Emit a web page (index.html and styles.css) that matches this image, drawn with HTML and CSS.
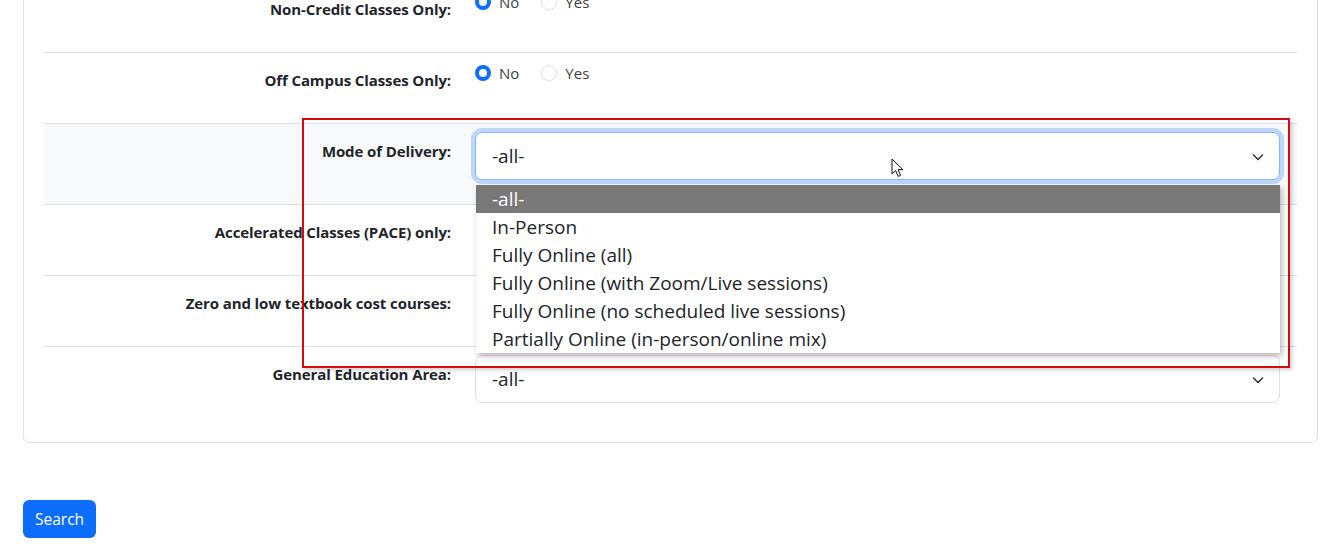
FILE: index.html
```html
<!DOCTYPE html>
<html lang="en">
<head>
    <meta charset="UTF-8">
    <meta name="viewport" content="width=device-width, initial-scale=1.0">
    <title>Class Search</title>
    <link rel="stylesheet" href="styles.css">
</head>
<body>
    <div class="search-card">
        <div class="form-row">
            <div class="form-label">Non-Credit Classes Only:</div>
            <div class="form-control radios">
                <label class="radio"><span class="dot checked"></span>No</label>
                <label class="radio"><span class="dot"></span>Yes</label>
            </div>
        </div>
        <div class="form-row">
            <div class="form-label">Off Campus Classes Only:</div>
            <div class="form-control radios">
                <label class="radio"><span class="dot checked"></span>No</label>
                <label class="radio"><span class="dot"></span>Yes</label>
            </div>
        </div>
        <div class="form-row shaded">
            <div class="form-label">Mode of Delivery:</div>
            <div class="form-control">
                <div class="select-wrap">
                    <div class="select focused">-all-
                        <svg class="chevron" width="16" height="16" viewBox="0 0 16 16"><path d="M3.5 6l4.5 4.5L12.5 6" fill="none" stroke="#343a40" stroke-width="1.6" stroke-linecap="round" stroke-linejoin="round"/></svg>
                    </div>
                    <ul class="options">
                        <li class="active">-all-</li>
                        <li>In-Person</li>
                        <li>Fully Online (all)</li>
                        <li>Fully Online (with Zoom/Live sessions)</li>
                        <li>Fully Online (no scheduled live sessions)</li>
                        <li>Partially Online (in-person/online mix)</li>
                    </ul>
                    <svg class="cursor" width="14" height="20" viewBox="0 0 14 20"><path d="M1 1v15l3.6-3.4 2.6 5.8 2.4-1.1-2.6-5.6H12z" fill="#fff" stroke="#111" stroke-width="1" stroke-linejoin="round"/></svg>
                </div>
            </div>
        </div>
        <div class="form-row">
            <div class="form-label">Accelerated Classes (PACE) only:</div>
            <div class="form-control covered"></div>
        </div>
        <div class="form-row">
            <div class="form-label">Zero and low textbook cost courses:</div>
            <div class="form-control covered"></div>
        </div>
        <div class="form-row">
            <div class="form-label">General Education Area:</div>
            <div class="form-control">
                <div class="select">-all-
                    <svg class="chevron" width="16" height="16" viewBox="0 0 16 16"><path d="M3.5 6l4.5 4.5L12.5 6" fill="none" stroke="#343a40" stroke-width="1.6" stroke-linecap="round" stroke-linejoin="round"/></svg>
                </div>
            </div>
        </div>
    </div>

    <button class="btn-search">Search</button>

    <!-- highlight drawn over the screenshot -->
    <div class="highlight"></div>
</body>
</html>
```

FILE: styles.css
```css
:root {
    --blue: #0d6efd;
    --border: #dee2e6;
    --text: #212529;
    --shade: #f8f9fa;
}
body {
    font-family: 'Open Sans', 'Noto Sans', sans-serif;
    color: var(--text);
    margin: 0;
    padding: 0 22px 0 23px;
    background: #fff;
}
.search-card {
    margin-top: -40px;
    border: 1px solid var(--border);
    border-radius: 6px;
    padding: 20px 20px 15px;
}
.form-row {
    display: grid;
    grid-template-columns: 407px 805px;
    column-gap: 24px;
    padding: 8px 0 24px;
    border-top: 1px solid var(--border);
}
.form-row:first-child {
    border-top-color: transparent;
}
.form-row.shaded {
    background-color: var(--shade);
}
.form-label {
    text-align: right;
    font-weight: 700;
    font-size: 15px;
    letter-spacing: -0.1px;
    line-height: 24px;
    padding-top: 7px;
}
.radios,
.covered {
    height: 38px;
}
.radios {
    display: flex;
    gap: 22px;
    font-size: 15px;
    line-height: 24px;
}
.radio {
    display: flex;
    align-items: flex-start;
    gap: 8px;
    color: #3b3f44;
}
.dot {
    width: 16px;
    height: 16px;
    margin-top: 4px;
    box-sizing: border-box;
    border: 1px solid #dcdfe3;
    border-radius: 50%;
    background: #fff;
}
.dot.checked {
    border: 4.5px solid var(--blue);
}
.select-wrap {
    position: relative;
}
.select {
    position: relative;
    height: 48px;
    box-sizing: border-box;
    border: 1px solid var(--border);
    border-radius: 7px;
    background: #fff;
    padding: 8px 16px;
    font-size: 19px;
    line-height: 30px;
    color: var(--text);
}
.select.focused {
    border-color: #86b7fe;
    box-shadow: 0 0 0 4px rgba(13, 110, 253, 0.25);
}
.chevron {
    position: absolute;
    right: 13px;
    top: 16px;
}
.options {
    position: absolute;
    top: 53px;
    left: 1px;
    right: 0;
    margin: 0;
    padding: 0;
    list-style: none;
    background: #fff;
    box-shadow: 2px 3px 6px rgba(0, 0, 0, 0.28);
    z-index: 2;
    font-size: 19px;
    color: var(--text);
}
.options li {
    height: 28px;
    line-height: 28px;
    padding-left: 16px;
}
.options li.active {
    background: #787878;
    color: #fff;
}
.cursor {
    position: absolute;
    left: 416px;
    top: 26px;
    z-index: 3;
}
.btn-search {
    margin-top: 57px;
    background-color: var(--blue);
    color: #fff;
    border: none;
    border-radius: 6px;
    height: 38px;
    padding: 0 12px;
    font-family: inherit;
    font-size: 15.5px;
}
.highlight {
    position: absolute;
    left: 302px;
    top: 118px;
    width: 984px;
    height: 246px;
    border: 2px solid #d40c12;
    box-shadow: 2px 2px 4px rgba(0, 0, 0, 0.2);
    z-index: 5;
    pointer-events: none;
}
```
